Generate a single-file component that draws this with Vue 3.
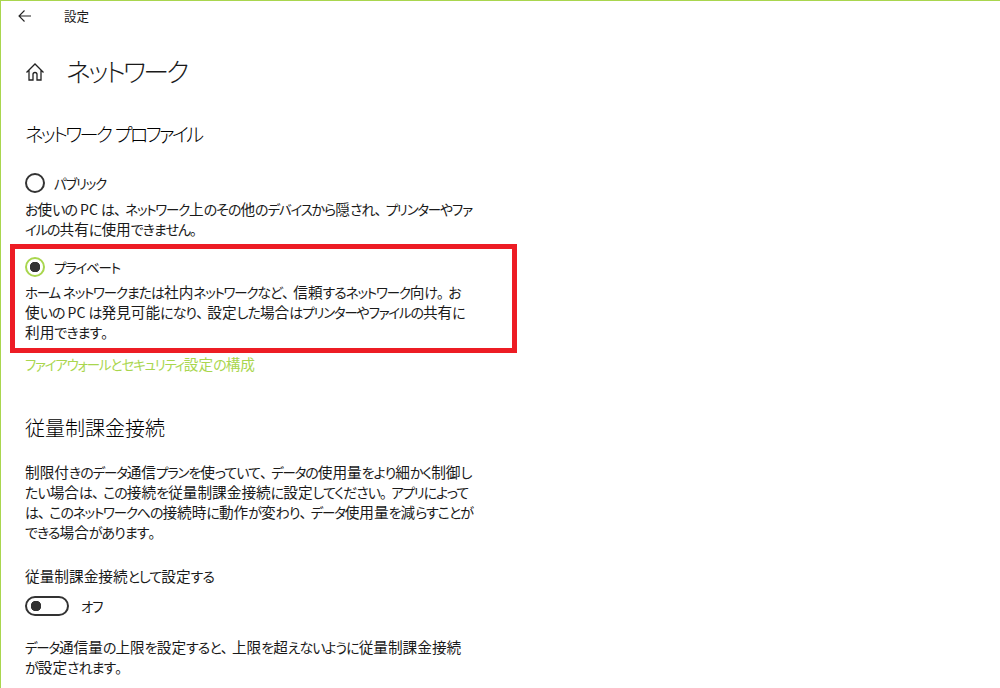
<script setup>
const TOKEN = /[ァ-ヶー]+|[ぁ-ん]+|[一-龯々]+|[、。]+|[^ァ-ヶーぁ-ん一-龯々、。]+/g
const kindOf = (t) => {
  if (/^[ァ-ヶー]/.test(t)) return 'kata'
  if (/^[ぁ-ん]/.test(t)) return 'hira'
  if (/^[一-龯々]/.test(t)) return 'kanji'
  if (/^[、。]/.test(t)) return 'punct'
  return 'latin'
}
const runs = (text) => text.match(TOKEN).map((t) => ({ t, c: kindOf(t) }))
const para = (lines) => lines.map(runs)

const title = runs('ネットワーク')
const profileHeading = runs('ネットワーク プロファイル')
const meteredHeading = runs('従量制課金接続')
const appName = runs('設定')
const publicLabel = runs('パブリック')
const privateLabel = runs('プライベート')
const link = runs('ファイアウォールとセキュリティ設定の構成')
const settingLabel = runs('従量制課金接続として設定する')
const offLabel = runs('オフ')
const publicText = para(['お使いの PC は、ネットワーク上のその他のデバイスから隠され、プリンターやファ', 'イルの共有に使用できません。'])
const privateText = para(['ホーム ネットワークまたは社内ネットワークなど、信頼するネットワーク向け。お', '使いの PC は発見可能になり、設定した場合はプリンターやファイルの共有に', '利用できます。'])
const meteredText = para(['制限付きのデータ通信プランを使っていて、データの使用量をより細かく制御し', 'たい場合は、この接続を従量制課金接続に設定してください。アプリによって', 'は、このネットワークへの接続時に動作が変わり、データ使用量を減らすことが', 'できる場合があります。'])
const limitText = para(['データ通信量の上限を設定すると、上限を超えないように従量制課金接続', 'が設定されます。'])
</script>

<template>
  <div class="page">
    <header class="topbar">
      <svg class="back" width="16" height="14" viewBox="0 0 16 14" fill="none" stroke="#222" stroke-width="1.1">
        <path d="M14 7H2M7.5 1.5 2 7l5.5 5.5" />
      </svg>
      <span class="app-name"><span v-for="(r, i) in appName" :key="i" :class="r.c">{{ r.t }}</span></span>
    </header>

    <div class="title-row">
      <svg class="home" width="20" height="20" viewBox="0 0 20 20" fill="none" stroke="#222" stroke-width="1.3">
        <path d="M1.5 10.5 10 2l8.5 8.5M4 8.5V18h4v-5.5a2 2 0 0 1 4 0V18h4V8.5" />
      </svg>
      <h1><span v-for="(r, i) in title" :key="i" :class="r.c">{{ r.t }}</span></h1>
    </div>

    <h2 class="profile-heading"><span v-for="(r, i) in profileHeading" :key="i" :class="r.c">{{ r.t }}</span></h2>

    <div class="option">
      <div class="radio-row">
        <span class="radio"></span>
        <span><span v-for="(r, i) in publicLabel" :key="i" :class="r.c">{{ r.t }}</span></span>
      </div>
      <div v-for="(line, n) in publicText" :key="n" class="line"><span v-for="(r, i) in line" :key="i" :class="r.c">{{ r.t }}</span></div>
    </div>

    <div class="highlight">
      <div class="radio-row">
        <span class="radio on"></span>
        <span><span v-for="(r, i) in privateLabel" :key="i" :class="r.c">{{ r.t }}</span></span>
      </div>
      <div v-for="(line, n) in privateText" :key="n" class="line"><span v-for="(r, i) in line" :key="i" :class="r.c">{{ r.t }}</span></div>
    </div>

    <a class="link"><span v-for="(r, i) in link" :key="i" :class="r.c">{{ r.t }}</span></a>

    <h2 class="metered-heading"><span v-for="(r, i) in meteredHeading" :key="i" :class="r.c">{{ r.t }}</span></h2>
    <div class="metered-text">
      <div v-for="(line, n) in meteredText" :key="n" class="line"><span v-for="(r, i) in line" :key="i" :class="r.c">{{ r.t }}</span></div>
    </div>

    <div class="setting-label"><span v-for="(r, i) in settingLabel" :key="i" :class="r.c">{{ r.t }}</span></div>
    <div class="toggle-row">
      <span class="toggle"></span>
      <span><span v-for="(r, i) in offLabel" :key="i" :class="r.c">{{ r.t }}</span></span>
    </div>
    <div class="limit-text">
      <div v-for="(line, n) in limitText" :key="n" class="line"><span v-for="(r, i) in line" :key="i" :class="r.c">{{ r.t }}</span></div>
    </div>
  </div>
</template>

<style scoped>
.page {
  box-sizing: border-box;
  width: 1000px;
  height: 688px;
  overflow: hidden;
  background: #fff;
  border-top: 1px solid #a9d64e;
  border-left: 1px solid #a9d64e;
  color: #1a1a1a;
  font-family: "Noto Sans CJK JP", "Noto Sans", sans-serif;
  font-feature-settings: "palt";
  font-size: 14px;
  line-height: 20px;
}
.line { white-space: pre; }
.kanji, .hira, .kata, .punct, .latin { line-height: 0; }
.kanji { font-size: 1.048em; }
.hira { letter-spacing: -0.07em; }
.kata { font-size: 0.96em; letter-spacing: -0.09em; }
.punct { font-feature-settings: normal; letter-spacing: -0.2em; }
.topbar { display: flex; align-items: center; height: 29px; padding-left: 16px; }
.back { margin-right: 31px; }
.app-name { font-size: 12px; }
.title-row { display: flex; align-items: center; height: 40px; margin-top: 21px; padding-left: 24px; }
.home { margin: 2px 21px 0 0; }
h1 { margin: 0; font-size: 27px; font-weight: 300; line-height: 40px; }
h1 .kata { letter-spacing: -0.105em; }
h2 { margin: 0; font-size: 20px; font-weight: 300; color: #000; line-height: 28px; padding-left: 24px; }
h2 .kanji { font-size: 1em; }
h2 .kata { letter-spacing: -0.14em; }
.profile-heading { margin-top: 29px; }
.option { padding-left: 24px; margin-top: 23px; }
.radio-row { display: flex; align-items: center; height: 24px; margin-bottom: 4px; }
.radio {
  box-sizing: border-box;
  width: 20px;
  height: 20px;
  margin-right: 9px;
  border: 2px solid #333;
  border-radius: 50%;
}
.radio.on { border-color: #a9d64e; background: radial-gradient(circle, #333 0 5px, transparent 5.5px); }
.highlight {
  box-sizing: border-box;
  width: 507px;
  height: 109px;
  margin: 5px 0 0 9px;
  padding: 6px 0 0 10px;
  border: 5px solid #ed1c24;
}
.highlight .radio-row { margin-bottom: 3px; }
.link { display: block; padding-left: 24px; margin-top: 1px; color: #a9d64e; }
.metered-heading { margin-top: 40px; }
.metered-text { padding-left: 24px; margin-top: 20px; }
.setting-label { padding-left: 24px; margin-top: 24px; }
.toggle-row { display: flex; align-items: center; height: 20px; padding-left: 24px; margin-top: 10px; }
.toggle {
  box-sizing: border-box;
  width: 44px;
  height: 20px;
  margin-right: 12px;
  border: 2px solid #333;
  border-radius: 10px;
  background: radial-gradient(circle at 9px 8px, #333 0 5px, transparent 5.5px);
}
.limit-text { padding-left: 24px; margin-top: 21px; }
</style>
